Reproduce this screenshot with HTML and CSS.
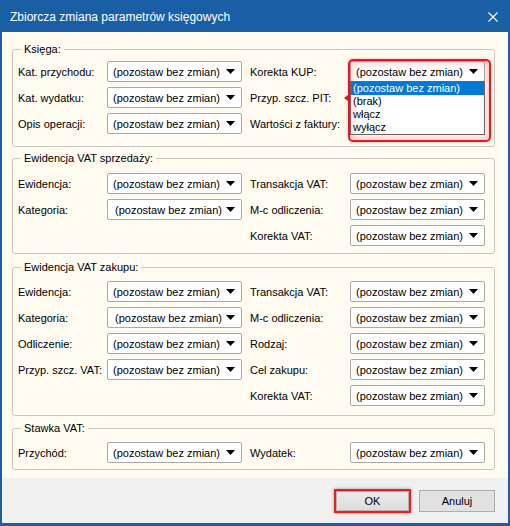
FILE: index.html
```html
<!DOCTYPE html>
<html lang="pl">
<head>
<meta charset="utf-8">
<title>Zbiorcza zmiana parametrów księgowych</title>
<link rel="stylesheet" href="styles.css">
</head>
<body>
<div class="window">
  <div class="titlebar">
    <span class="title">Zbiorcza zmiana parametrów księgowych</span>
    <svg class="close" width="10" height="10" viewBox="0 0 10 10"><path d="M0.5 0.5 L9.5 9.5 M9.5 0.5 L0.5 9.5" stroke="#fff" stroke-width="1.1" fill="none"/></svg>
  </div>
  <div class="content">
    <fieldset class="group g1">
      <legend>Księga:</legend>
      <div class="grid">
        <span class="lbl">Kat. przychodu:</span>
        <div class="combo"><span>(pozostaw bez zmian)</span><svg class="arrow" viewBox="0 0 9 5"><polygon points="0,0 9,0 4.5,5"/></svg></div>
        <span class="lbl r">Korekta KUP:</span>
        <div class="combo open"><span>(pozostaw bez zmian)</span><svg class="arrow" viewBox="0 0 9 5"><polygon points="0,0 9,0 4.5,5"/></svg>
          <ul class="list">
            <li class="sel">(pozostaw bez zmian)</li>
            <li>(brak)</li>
            <li>włącz</li>
            <li>wyłącz</li>
          </ul>
          <div class="annot"></div>
        </div>

        <span class="lbl">Kat. wydatku:</span>
        <div class="combo"><span>(pozostaw bez zmian)</span><svg class="arrow" viewBox="0 0 9 5"><polygon points="0,0 9,0 4.5,5"/></svg></div>
        <span class="lbl r">Przyp. szcz. PIT:</span>
        <div class="combo covered"></div>

        <span class="lbl">Opis operacji:</span>
        <div class="combo"><span>(pozostaw bez zmian)</span><svg class="arrow" viewBox="0 0 9 5"><polygon points="0,0 9,0 4.5,5"/></svg></div>
        <span class="lbl r">Wartości z faktury:</span>
        <div class="combo covered"></div>
      </div>
    </fieldset>

    <fieldset class="group g2">
      <legend>Ewidencja VAT sprzedaży:</legend>
      <div class="grid">
        <span class="lbl">Ewidencja:</span>
        <div class="combo"><span>(pozostaw bez zmian)</span><svg class="arrow" viewBox="0 0 9 5"><polygon points="0,0 9,0 4.5,5"/></svg></div>
        <span class="lbl r">Transakcja VAT:</span>
        <div class="combo"><span>(pozostaw bez zmian)</span><svg class="arrow" viewBox="0 0 9 5"><polygon points="0,0 9,0 4.5,5"/></svg></div>

        <span class="lbl">Kategoria:</span>
        <div class="combo shift"><span>(pozostaw bez zmian)</span><svg class="arrow" viewBox="0 0 9 5"><polygon points="0,0 9,0 4.5,5"/></svg></div>
        <span class="lbl r">M-c odliczenia:</span>
        <div class="combo"><span>(pozostaw bez zmian)</span><svg class="arrow" viewBox="0 0 9 5"><polygon points="0,0 9,0 4.5,5"/></svg></div>

        <span></span><span></span>
        <span class="lbl r">Korekta VAT:</span>
        <div class="combo"><span>(pozostaw bez zmian)</span><svg class="arrow" viewBox="0 0 9 5"><polygon points="0,0 9,0 4.5,5"/></svg></div>
      </div>
    </fieldset>

    <fieldset class="group g3">
      <legend>Ewidencja VAT zakupu:</legend>
      <div class="grid">
        <span class="lbl">Ewidencja:</span>
        <div class="combo"><span>(pozostaw bez zmian)</span><svg class="arrow" viewBox="0 0 9 5"><polygon points="0,0 9,0 4.5,5"/></svg></div>
        <span class="lbl r">Transakcja VAT:</span>
        <div class="combo"><span>(pozostaw bez zmian)</span><svg class="arrow" viewBox="0 0 9 5"><polygon points="0,0 9,0 4.5,5"/></svg></div>

        <span class="lbl">Kategoria:</span>
        <div class="combo shift"><span>(pozostaw bez zmian)</span><svg class="arrow" viewBox="0 0 9 5"><polygon points="0,0 9,0 4.5,5"/></svg></div>
        <span class="lbl r">M-c odliczenia:</span>
        <div class="combo"><span>(pozostaw bez zmian)</span><svg class="arrow" viewBox="0 0 9 5"><polygon points="0,0 9,0 4.5,5"/></svg></div>

        <span class="lbl">Odliczenie:</span>
        <div class="combo"><span>(pozostaw bez zmian)</span><svg class="arrow" viewBox="0 0 9 5"><polygon points="0,0 9,0 4.5,5"/></svg></div>
        <span class="lbl r">Rodzaj:</span>
        <div class="combo"><span>(pozostaw bez zmian)</span><svg class="arrow" viewBox="0 0 9 5"><polygon points="0,0 9,0 4.5,5"/></svg></div>

        <span class="lbl">Przyp. szcz. VAT:</span>
        <div class="combo"><span>(pozostaw bez zmian)</span><svg class="arrow" viewBox="0 0 9 5"><polygon points="0,0 9,0 4.5,5"/></svg></div>
        <span class="lbl r">Cel zakupu:</span>
        <div class="combo"><span>(pozostaw bez zmian)</span><svg class="arrow" viewBox="0 0 9 5"><polygon points="0,0 9,0 4.5,5"/></svg></div>

        <span></span><span></span>
        <span class="lbl r">Korekta VAT:</span>
        <div class="combo"><span>(pozostaw bez zmian)</span><svg class="arrow" viewBox="0 0 9 5"><polygon points="0,0 9,0 4.5,5"/></svg></div>
      </div>
    </fieldset>

    <fieldset class="group g4">
      <legend>Stawka VAT:</legend>
      <div class="grid">
        <span class="lbl">Przychód:</span>
        <div class="combo"><span>(pozostaw bez zmian)</span><svg class="arrow" viewBox="0 0 9 5"><polygon points="0,0 9,0 4.5,5"/></svg></div>
        <span class="lbl r">Wydatek:</span>
        <div class="combo"><span>(pozostaw bez zmian)</span><svg class="arrow" viewBox="0 0 9 5"><polygon points="0,0 9,0 4.5,5"/></svg></div>
      </div>
    </fieldset>
  </div>
  <div class="footer">
    <div class="highlight"><button class="btn ok">OK</button></div>
    <button class="btn cancel">Anuluj</button>
  </div>
</div>
</body>
</html>
```

FILE: styles.css
```css
html, body {
  margin: 0;
  padding: 0;
  background: #ffffff;
}

body {
  font-family: "Liberation Sans", Arial, sans-serif;
  font-size: 11px;
  color: #000;
}

.window {
  width: 510px;
  height: 526px;
  box-sizing: border-box;
  background: #1a5fa6;
  padding: 0 2px 3px 2px;
  display: flex;
  flex-direction: column;
}

.titlebar {
  height: 32px;
  flex: none;
  display: flex;
  align-items: center;
  justify-content: space-between;
  padding: 1px 10px 0 8px;
  box-sizing: border-box;
}

.title {
  color: #fff;
  font-size: 12px;
  font-family: "Liberation Sans", Arial, sans-serif;
}

.close {
  display: block;
  margin-top: 1px;
}

.content {
  flex: 1;
  background: #fffbf0;
  padding: 11px 13px 8px 10px;
  display: flex;
  flex-direction: column;
}

.group {
  margin: 0;
  min-width: 0;
  border: 1px solid #c9c6bd;
  border-radius: 3px;
  padding: 0 8px 0 5px;
}

.group legend {
  font-size: 11px;
  line-height: 13px;
  padding: 0 3px;
  margin-left: 3px;
}

.g1 { padding-top: 5px; padding-bottom: 12px; }
.g2 { margin-top: 5px; padding-top: 8px; padding-bottom: 7px; }
.g3 { margin-top: 7px; padding-top: 7px; padding-bottom: 9px; }
.g4 { margin-top: 6px; padding-top: 7px; padding-bottom: 6px; }

.grid {
  display: grid;
  grid-template-columns: 89px 135px 108px 135px;
  grid-auto-rows: 21px;
  row-gap: 5px;
}

.lbl {
  display: flex;
  align-items: center;
  white-space: nowrap;
}

.lbl.r {
  padding-left: 8px;
}

.combo {
  position: relative;
  box-sizing: border-box;
  background: #fff;
  border: 1px solid #a9a9a9;
  border-radius: 2px;
  display: flex;
  align-items: center;
  justify-content: space-between;
  padding: 0 6px 0 5px;
  white-space: nowrap;
}

.combo.shift {
  padding-left: 7px;
}

.combo.covered {
  visibility: hidden;
}

.arrow {
  width: 9px;
  height: 5px;
  display: block;
  fill: #000;
}

.list {
  position: absolute;
  z-index: 5;
  top: 100%;
  left: -1px;
  right: -1px;
  margin: 0;
  padding: 0;
  list-style: none;
  background: #fff;
  border: 1px solid #646464;
}

.list li {
  height: 13px;
  line-height: 13px;
  padding-left: 2px;
  white-space: nowrap;
}

.list li.sel {
  background: #0078d7;
  color: #fff;
}

.annot {
  position: absolute;
  z-index: 6;
  left: -3px;
  top: -3px;
  width: 139px;
  height: 79px;
  border: 2px solid #e8161e;
  border-radius: 5px;
  box-shadow: inset 0 0 7px 2px rgba(240, 60, 70, 0.28), 0 0 3px rgba(240, 40, 40, 0.35);
  pointer-events: none;
}

.annot::before {
  content: "";
  position: absolute;
  left: -6px;
  top: 34px;
  border-right: 4px solid #e8161e;
  border-top: 3px solid transparent;
  border-bottom: 3px solid transparent;
}

.footer {
  height: 45px;
  flex: none;
  background: #f0f0f0;
  display: flex;
  justify-content: flex-end;
  align-items: center;
  gap: 8px;
  padding: 11px 13px 0 0;
  box-sizing: border-box;
  align-content: flex-start;
  flex-wrap: wrap;
}

.highlight {
  border: 2px solid #ec1c24;
  box-shadow: 0 0 3px rgba(0, 0, 0, 0.35);
  display: flex;
}

.btn {
  font-family: "Liberation Sans", Arial, sans-serif;
  font-size: 11px;
  color: #000;
  margin: 0;
  padding: 0;
  background: #e1e1e1;
  border: 1px solid #adadad;
  border-radius: 0;
}

.btn.ok {
  width: 73px;
  height: 20px;
  background: linear-gradient(#ececec, #dcdcdc);
  border-color: #b5b5b5;
}

.btn.cancel {
  width: 76px;
  height: 22px;
}
```
